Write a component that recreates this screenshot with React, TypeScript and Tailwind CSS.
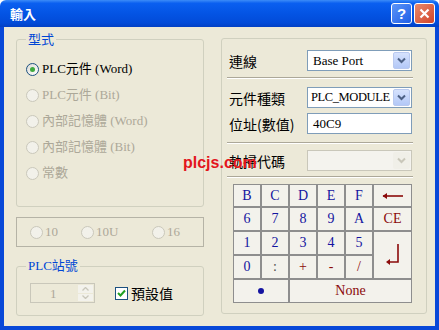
import React from "react";

const SERIF = "font-['Liberation_Serif','Noto_Sans_CJK_TC',serif]";
const CJK = "font-['Noto_Sans_CJK_TC','Liberation_Sans',sans-serif]";

function Radio({ checked = false, disabled = false }: { checked?: boolean; disabled?: boolean }) {
  return (
    <span
      className={
        disabled
          ? "flex h-[13px] w-[13px] shrink-0 items-center justify-center rounded-full border border-[#cac8bb] bg-[#f2f1ea]"
          : "flex h-[13px] w-[13px] shrink-0 items-center justify-center rounded-full border border-[#1c5180] bg-[linear-gradient(135deg,#dcdbd5,#ffffff)]"
      }
    >
      {checked && <span className="h-[5px] w-[5px] rounded-full bg-[#3ea93e]" />}
    </span>
  );
}

function Chevron({ color }: { color: string }) {
  return (
    <svg width="9" height="7" viewBox="0 0 9 7">
      <path d="M1 1.5 L4.5 5 L8 1.5" fill="none" stroke={color} strokeWidth="2" />
    </svg>
  );
}

function Combo({ text, disabled = false, tight = false }: { text?: string; disabled?: boolean; tight?: boolean }) {
  return (
    <div
      className={
        disabled
          ? "flex h-[21px] w-[105px] items-center border border-[#c9c7ba] bg-[#f4f3ee] p-[1px]"
          : "flex h-[21px] w-[105px] items-center border border-[#7f9db9] bg-white p-[1px]"
      }
    >
      <span
        className={`flex-1 overflow-hidden whitespace-nowrap leading-none text-black ${SERIF} ${
          tight ? "pl-[2px] text-[12.5px] tracking-[-0.4px]" : "pl-[4px] text-[13px]"
        }`}
      >
        {text}
      </span>
      <span
        className={
          disabled
            ? "flex h-[17px] w-[17px] items-center justify-center rounded-[2px] bg-[#f0efe8]"
            : "flex h-[17px] w-[17px] items-center justify-center rounded-[2px] border border-[#b9c9ef] bg-[linear-gradient(180deg,#d6e2fd,#b3c8f7)]"
        }
      >
        <Chevron color={disabled ? "#c9c7ba" : "#4d6185"} />
      </span>
    </div>
  );
}

function Sep() {
  return <div className="ml-[5px] h-[2px] w-[186px] border-t border-b border-t-[#aca899] border-b-white" />;
}

function Key({
  children,
  red = false,
  className = "",
}: {
  children: React.ReactNode;
  red?: boolean;
  className?: string;
}) {
  return (
    <div
      className={`flex items-center justify-center bg-[#f3f2ec] text-[14px] leading-none ${SERIF} ${
        red ? "text-[#8b0a0a]" : "text-[#1414a0]"
      } ${className}`}
    >
      {children}
    </div>
  );
}

export default function App() {
  return (
    <div className="relative flex h-[330px] w-[439px] flex-col overflow-hidden">
      {/* title bar */}
      <div className="flex h-[27px] shrink-0 items-center justify-between rounded-t-[6px] bg-[linear-gradient(180deg,#3c8cf8_0%,#0a5ff0_12%,#0454e4_50%,#024bd8_85%,#0240c4_100%)] pl-[10px] pr-[4px]">
        <span className={`text-[13px] font-bold leading-none text-white ${CJK}`}>輸入</span>
        <div className="flex gap-[2px]">
          <div className="flex h-[21px] w-[21px] items-center justify-center rounded-[3px] border border-white bg-[linear-gradient(135deg,#5c95f8,#1f5ee6)] text-[15px] font-bold leading-none text-white font-['Liberation_Sans',sans-serif]">
            ?
          </div>
          <div className="flex h-[21px] w-[21px] items-center justify-center rounded-[3px] border border-white bg-[linear-gradient(135deg,#e88a6c,#d2442a)]">
            <svg width="11" height="11" viewBox="0 0 11 11">
              <path d="M1.5 1.5 L9.5 9.5 M9.5 1.5 L1.5 9.5" stroke="white" strokeWidth="2.2" />
            </svg>
          </div>
        </div>
      </div>

      {/* body */}
      <div className="flex flex-1 border-x-[4px] border-b-[4px] border-[#0848d8] bg-[#ece9d8] pl-[12px]">
        {/* left column */}
        <div className="flex w-[188px] flex-col pt-[5px]">
          <fieldset className="rounded-[3px] border border-[#d0d0bf] pb-[20px]">
            <legend className={`ml-[9px] px-[2px] text-[13px] leading-[14px] text-[#0046d5] ${CJK}`}>型式</legend>
            <div className={`flex flex-col pl-[9px] pt-[10px] text-[13px] ${SERIF}`}>
              <div className="flex h-[26px] items-center gap-[3px] text-black">
                <Radio checked />
                <span>PLC元件 (Word)</span>
              </div>
              {["PLC元件 (Bit)", "內部記憶體 (Word)", "內部記憶體 (Bit)", "常數"].map((t) => (
                <div key={t} className="flex h-[26px] items-center gap-[3px] text-[#aca899]">
                  <Radio disabled />
                  <span>{t}</span>
                </div>
              ))}
            </div>
          </fieldset>

          <div className={`mt-[10px] flex h-[30px] items-center border border-[#b5b3a6] pl-[13px] text-[13px] text-[#aca899] ${SERIF}`}>
            <div className="flex w-[51px] items-center gap-[2px]">
              <Radio disabled />
              <span>10</span>
            </div>
            <div className="flex w-[71px] items-center gap-[2px]">
              <Radio disabled />
              <span>10U</span>
            </div>
            <div className="flex items-center gap-[2px]">
              <Radio disabled />
              <span>16</span>
            </div>
          </div>

          <fieldset className="mt-[12px] rounded-[3px] border border-[#d0d0bf] pb-[12px]">
            <legend className={`ml-[9px] px-[2px] text-[13px] leading-[14px] text-[#0046d5] ${SERIF}`}>PLC站號</legend>
            <div className="flex items-center pl-[13px] pt-[10px]">
              <div className="flex h-[20px] w-[65px] items-center border border-[#c9c7ba] p-[1px]">
                <span className={`flex-1 pl-[18px] text-[13px] leading-none text-[#aca899] ${SERIF}`}>1</span>
                <div className="flex h-full w-[15px] flex-col gap-[1px]">
                  <div className="flex flex-1 items-center justify-center bg-[#f3f2ec]">
                    <svg width="7" height="4" viewBox="0 0 7 4">
                      <path d="M0.5 3.5 L3.5 0.5 L6.5 3.5" fill="none" stroke="#c9c7ba" strokeWidth="1.3" />
                    </svg>
                  </div>
                  <div className="flex flex-1 items-center justify-center bg-[#f3f2ec]">
                    <svg width="7" height="4" viewBox="0 0 7 4">
                      <path d="M0.5 0.5 L3.5 3.5 L6.5 0.5" fill="none" stroke="#c9c7ba" strokeWidth="1.3" />
                    </svg>
                  </div>
                </div>
              </div>
              <div className="ml-[20px] flex h-[13px] w-[13px] items-center justify-center border border-[#1c5180] bg-white">
                <svg width="9" height="8" viewBox="0 0 9 8">
                  <path d="M1 4 L3.5 6.5 L8 1.5" fill="none" stroke="#21a121" strokeWidth="2" />
                </svg>
              </div>
              <span className={`ml-[3px] text-[14px] leading-none text-black ${CJK}`}>預設值</span>
            </div>
          </fieldset>
        </div>

        {/* right column */}
        <div className="ml-[17px] mt-[11px] flex h-[276px] w-[206px] flex-col rounded-[3px] border border-[#d0d0bf] pt-[11px]">
          <div className="flex items-center pl-[7px]">
            <span className={`w-[78px] text-[14px] leading-none text-black ${CJK}`}>連線</span>
            <Combo text="Base Port" />
          </div>
          <div className="mt-[6px]">
            <Sep />
          </div>
          <div className="mt-[8px] flex items-center pl-[7px]">
            <span className={`w-[78px] text-[14px] leading-none text-black ${CJK}`}>元件種類</span>
            <Combo text="PLC_MODULE" tight />
          </div>
          <div className="mt-[5px] flex items-center pl-[7px]">
            <span className={`w-[78px] text-[14px] leading-none text-black ${CJK}`}>位址(數值)</span>
            <div className="flex h-[21px] w-[105px] items-center border border-[#7f9db9] bg-white pl-[5px]">
              <span className={`text-[13px] leading-none text-black ${SERIF}`}>40C9</span>
            </div>
          </div>
          <div className="mt-[8px]">
            <Sep />
          </div>
          <div className="mt-[6px] flex items-center pl-[7px]">
            <span className={`w-[78px] text-[14px] leading-none text-black ${CJK}`}>軌掃代碼</span>
            <Combo disabled />
          </div>
          <div className="mt-[5px]">
            <Sep />
          </div>

          <div className="ml-[11px] mt-[6px] grid w-[179px] grid-cols-[26px_26px_26px_26px_26px_37px] grid-rows-[21px_22px_22px_22px_22px] gap-[2px] bg-[#8e8e8e] p-[1px]">
            {["B", "C", "D", "E", "F"].map((k) => (
              <Key key={k}>{k}</Key>
            ))}
            <Key red>
              <svg width="22" height="8" viewBox="0 0 22 8">
                <path d="M1 4 H21" stroke="#8b0a0a" strokeWidth="1.6" />
                <path d="M0.5 4 L5 1 L5 7 Z" fill="#8b0a0a" />
              </svg>
            </Key>
            {["6", "7", "8", "9", "A"].map((k) => (
              <Key key={k}>{k}</Key>
            ))}
            <Key red>CE</Key>
            {["1", "2", "3", "4", "5"].map((k) => (
              <Key key={k}>{k}</Key>
            ))}
            <Key red className="row-span-2">
              <svg width="16" height="24" viewBox="0 0 16 24">
                <path d="M13 1 V19 H3" fill="none" stroke="#8b0a0a" strokeWidth="1.6" />
                <path d="M1 19 L5 16 L5 22 Z" fill="#8b0a0a" />
              </svg>
            </Key>
            <Key>0</Key>
            <Key className="text-[#505050]">:</Key>
            <Key red>+</Key>
            <Key red>-</Key>
            <Key red>/</Key>
            <Key className="col-span-2">
              <span className="h-[6px] w-[6px] rounded-full bg-[#1414a0]" />
            </Key>
            <Key red className="col-span-4">
              None
            </Key>
          </div>
        </div>
      </div>

      {/* watermark */}
      <span className="absolute left-[183px] top-[155px] text-[16px] font-bold leading-none text-[#e3161d] font-['Liberation_Sans',sans-serif]">
        plcjs.com
      </span>
    </div>
  );
}
